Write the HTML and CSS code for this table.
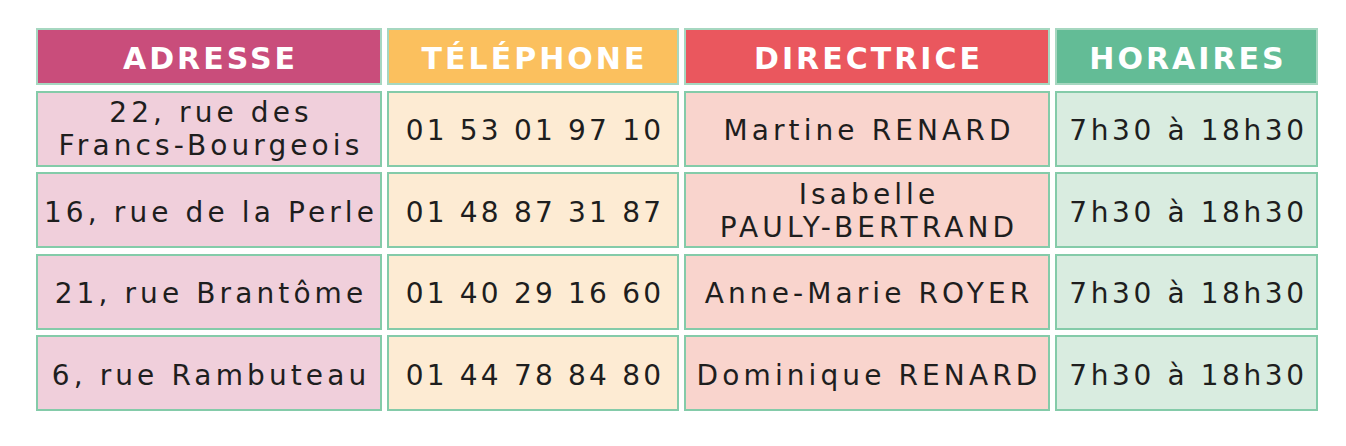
FILE: index.html
```html
<!DOCTYPE html>
<html lang="fr">
<head>
<meta charset="utf-8">
<title>Crèches</title>
<link rel="stylesheet" href="styles.css">
</head>
<body>
<div class="table">
  <div class="head h-addr">ADRESSE</div>
  <div class="head h-tel">TÉLÉPHONE</div>
  <div class="head h-dir">DIRECTRICE</div>
  <div class="head h-hor">HORAIRES</div>

  <div class="cell addr two">22, rue des<br>Francs-Bourgeois</div>
  <div class="cell tel">01 53 01 97 10</div>
  <div class="cell dir">Martine RENARD</div>
  <div class="cell hor">7h30 à 18h30</div>

  <div class="cell addr">16, rue de la Perle</div>
  <div class="cell tel">01 48 87 31 87</div>
  <div class="cell dir two">Isabelle<br>PAULY-BERTRAND</div>
  <div class="cell hor">7h30 à 18h30</div>

  <div class="cell addr">21, rue Brantôme</div>
  <div class="cell tel">01 40 29 16 60</div>
  <div class="cell dir">Anne-Marie ROYER</div>
  <div class="cell hor">7h30 à 18h30</div>

  <div class="cell addr">6, rue Rambuteau</div>
  <div class="cell tel">01 44 78 84 80</div>
  <div class="cell dir">Dominique RENARD</div>
  <div class="cell hor">7h30 à 18h30</div>
</div>
</body>
</html>
```

FILE: styles.css
```css
html, body {
  margin: 0;
  padding: 0;
  background: #ffffff;
}

.table {
  display: grid;
  grid-template-columns: 346px 292px 366px 263px;
  grid-template-rows: 57px 76px 76px 76px 76px;
  column-gap: 5px;
  row-gap: 5.5px;
  padding: 28px 0 0 36px;
  font-family: "DejaVu Sans", "Liberation Sans", sans-serif;
}

.head {
  display: flex;
  align-items: center;
  justify-content: center;
  box-sizing: border-box;
  border: 2px solid #a6d7c0;
  color: #ffffff;
  font-weight: bold;
  font-size: 30px;
  letter-spacing: 3px;
  padding: 4px 0 0 3px;
}

.h-addr { background: #c94d7b; }
.h-tel  { background: #fbc05e; }
.h-dir  { background: #ea575e; }
.h-hor  { background: #63bc96; }

.cell {
  display: flex;
  align-items: center;
  justify-content: center;
  text-align: center;
  box-sizing: border-box;
  border: 2px solid #84cba9;
  color: #1e1e1e;
  font-size: 28px;
  line-height: 32px;
  letter-spacing: 4.1px;
  padding: 5px 0 0 4px;
  white-space: nowrap;
}

.cell.two {
  line-height: 33px;
  padding-top: 1px;
}

.addr { background: #f0cfdb; }
.tel  { background: #fdebd3; letter-spacing: 3.2px; }
.dir  { background: #f9d4cd; }
.hor  { background: #d9ece0; letter-spacing: 3.6px; }
```
